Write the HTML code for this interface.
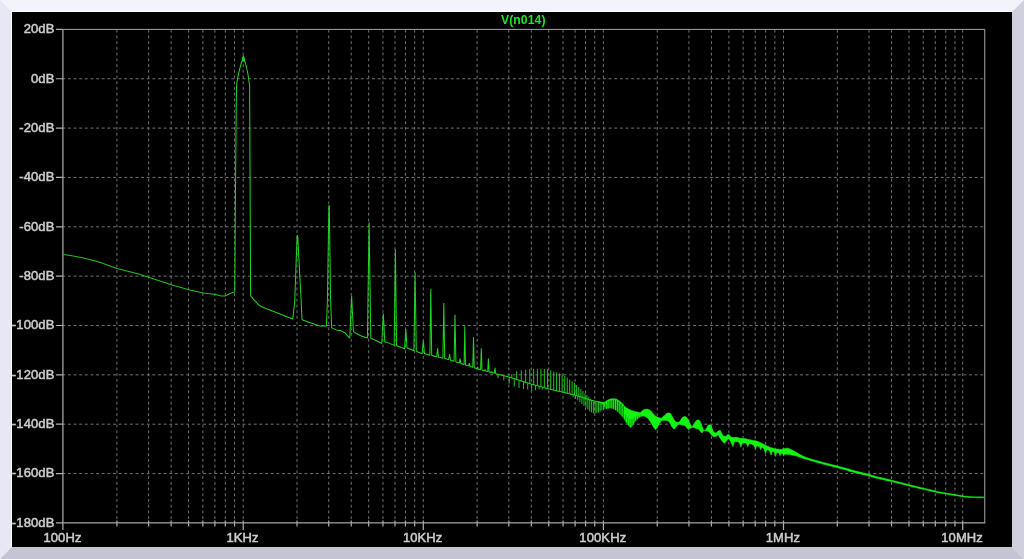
<!DOCTYPE html>
<html><head><meta charset="utf-8"><title>V(n014)</title>
<style>
html,body{margin:0;padding:0;background:#000;overflow:hidden}
svg{display:block}
text{font-family:"Liberation Sans",sans-serif;font-size:13px;fill:#cdcdcd;stroke:#cdcdcd;stroke-width:0.5px;letter-spacing:0.12px}
</style></head><body>
<svg width="1024" height="559" viewBox="0 0 1024 559">
<defs><filter id="nf" x="0" y="0" width="1024" height="559" filterUnits="userSpaceOnUse"><feOffset dx="0" dy="0"/></filter></defs>
<rect width="1024" height="559" fill="#f3f3fb"/>
<polygon points="0,0 12,12 12,547 0,559" fill="#e8e8f5"/>
<polygon points="1024,0 1012,12 1012,547 1024,559" fill="#cfcfdd"/>
<polygon points="0,559 12,547 1012,547 1024,559" fill="#c4c4d4"/>
<rect x="11" y="11" width="1001" height="536" fill="#ffffff"/>
<rect x="12" y="12" width="1000" height="535" fill="#000"/>
<path d="M116.92 29.80V522.90M148.63 29.80V522.90M171.13 29.80V522.90M188.58 29.80V522.90M202.85 29.80V522.90M214.90 29.80V522.90M225.35 29.80V522.90M234.56 29.80V522.90M243.20 29.80V522.90M297.02 29.80V522.90M328.73 29.80V522.90M351.23 29.80V522.90M368.68 29.80V522.90M382.95 29.80V522.90M395.00 29.80V522.90M405.45 29.80V522.90M414.66 29.80V522.90M423.30 29.80V522.90M477.12 29.80V522.90M508.83 29.80V522.90M531.33 29.80V522.90M548.78 29.80V522.90M563.05 29.80V522.90M575.10 29.80V522.90M585.55 29.80V522.90M594.76 29.80V522.90M603.40 29.80V522.90M657.22 29.80V522.90M688.93 29.80V522.90M711.43 29.80V522.90M728.88 29.80V522.90M743.15 29.80V522.90M755.20 29.80V522.90M765.65 29.80V522.90M774.86 29.80V522.90M783.50 29.80V522.90M837.32 29.80V522.90M869.03 29.80V522.90M891.53 29.80V522.90M908.98 29.80V522.90M923.25 29.80V522.90M935.30 29.80V522.90M945.75 29.80V522.90M954.96 29.80V522.90M962.70 29.80V522.90" stroke="#747474" stroke-width="1" stroke-dasharray="2.8 2.923" fill="none"/>
<path d="M62.30 78.75H984.75M62.30 128.10H984.75M62.30 177.45H984.75M62.30 226.80H984.75M62.30 276.15H984.75M62.30 325.50H984.75M62.30 374.85H984.75M62.30 424.20H984.75M62.30 473.55H984.75" stroke="#747474" stroke-width="1" stroke-dasharray="2.9 2.732" fill="none"/>
<path d="M116.92 520.60V526.40M148.63 520.60V526.40M171.13 520.60V526.40M188.58 520.60V526.40M202.85 520.60V526.40M214.90 520.60V526.40M225.35 520.60V526.40M234.56 520.60V526.40M243.20 520.60V529.90M297.02 520.60V526.40M328.73 520.60V526.40M351.23 520.60V526.40M368.68 520.60V526.40M382.95 520.60V526.40M395.00 520.60V526.40M405.45 520.60V526.40M414.66 520.60V526.40M423.30 520.60V529.90M477.12 520.60V526.40M508.83 520.60V526.40M531.33 520.60V526.40M548.78 520.60V526.40M563.05 520.60V526.40M575.10 520.60V526.40M585.55 520.60V526.40M594.76 520.60V526.40M603.40 520.60V529.90M657.22 520.60V526.40M688.93 520.60V526.40M711.43 520.60V526.40M728.88 520.60V526.40M743.15 520.60V526.40M755.20 520.60V526.40M765.65 520.60V526.40M774.86 520.60V526.40M783.50 520.60V529.90M837.32 520.60V526.40M869.03 520.60V526.40M891.53 520.60V526.40M908.98 520.60V526.40M923.25 520.60V526.40M935.30 520.60V526.40M945.75 520.60V526.40M954.96 520.60V526.40M962.70 520.60V529.90M62.90 522.90V529.90M56.00 29.40H62.90M56.00 78.75H62.90M56.00 128.10H62.90M56.00 177.45H62.90M56.00 226.80H62.90M56.00 276.15H62.90M56.00 325.50H62.90M56.00 374.85H62.90M56.00 424.20H62.90M56.00 473.55H62.90M56.00 522.90H62.90" stroke="#b0b0b0" stroke-width="1.2" fill="none"/>
<path d="M62.90 29.40H984.75V522.90" stroke="#a6a6a6" stroke-width="1" fill="none"/>
<path d="M62.90 28.90V522.90H985.25" stroke="#a4a4a4" stroke-width="1.3" fill="none"/>
<g filter="url(#nf)"><text x="62.5" y="542.3" text-anchor="middle">100Hz</text><text x="242.6" y="542.3" text-anchor="middle">1KHz</text><text x="422.7" y="542.3" text-anchor="middle">10KHz</text><text x="602.8" y="542.3" text-anchor="middle">100KHz</text><text x="782.9" y="542.3" text-anchor="middle">1MHz</text><text x="962.1" y="542.3" text-anchor="middle">10MHz</text><text x="54.5" y="33.1" text-anchor="end">20dB</text><text x="54.5" y="82.5" text-anchor="end">0dB</text><text x="54.5" y="131.8" text-anchor="end">-20dB</text><text x="54.5" y="181.1" text-anchor="end">-40dB</text><text x="54.5" y="230.5" text-anchor="end">-60dB</text><text x="54.5" y="279.8" text-anchor="end">-80dB</text><text x="54.5" y="329.2" text-anchor="end">-100dB</text><text x="54.5" y="378.6" text-anchor="end">-120dB</text><text x="54.5" y="427.9" text-anchor="end">-140dB</text><text x="54.5" y="477.2" text-anchor="end">-160dB</text><text x="54.5" y="526.6" text-anchor="end">-180dB</text></g>
<g filter="url(#nf)"><text x="523.3" y="24.2" text-anchor="middle" style="fill:#1fe61f;stroke:none;letter-spacing:0.1px;font-weight:bold;font-size:12.2px">V(n014)</text></g>
<path d="M598.0 401.8 L598.4 401.9 L598.8 401.9 L599.2 402.0 L599.6 402.0 L600.0 402.1 L600.4 402.1 L600.8 402.2 L601.2 402.2 L601.6 402.3 L602.0 402.3 L602.4 402.4 L602.8 402.4 L603.2 402.4 L603.6 402.5 L604.0 402.5 L604.4 402.2 L604.8 401.9 L605.2 401.7 L605.6 401.4 L606.0 401.2 L606.4 400.9 L606.8 400.6 L607.2 400.4 L607.6 400.1 L608.0 399.9 L608.4 399.7 L608.8 399.5 L609.2 399.4 L609.6 399.2 L610.0 399.1 L610.4 399.0 L610.8 398.9 L611.2 398.8 L611.6 398.7 L612.0 398.7 L612.4 398.7 L612.8 398.7 L613.2 398.7 L613.6 398.7 L614.0 398.8 L614.4 398.8 L614.8 398.8 L615.2 398.9 L615.6 398.9 L616.0 399.0 L616.4 399.1 L616.8 399.2 L617.2 399.4 L617.6 399.7 L618.0 399.9 L618.4 400.2 L618.8 400.5 L619.2 400.8 L619.6 401.1 L620.0 401.4 L620.4 401.8 L620.8 402.1 L621.2 402.5 L621.6 402.8 L622.0 403.2 L622.4 403.6 L622.8 404.0 L623.2 404.5 L623.6 405.0 L624.0 405.5 L624.4 405.9 L624.8 406.4 L625.2 406.8 L625.6 407.2 L626.0 407.5 L626.4 407.8 L626.8 408.1 L627.2 408.3 L627.6 408.6 L628.0 408.8 L628.4 409.0 L628.8 409.2 L629.2 409.4 L629.6 409.6 L630.0 409.7 L630.4 409.9 L630.8 410.1 L631.2 410.2 L631.6 410.4 L632.0 410.5 L632.4 410.7 L632.8 410.8 L633.2 410.9 L633.6 411.0 L634.0 411.2 L634.4 411.3 L634.8 411.4 L635.2 411.5 L635.6 411.6 L636.0 411.7 L636.4 411.8 L636.8 411.9 L637.2 412.0 L637.6 412.1 L638.0 412.2 L638.4 412.3 L638.8 412.4 L639.2 412.5 L639.6 412.6 L640.0 412.7 L640.4 412.5 L640.8 412.2 L641.2 411.8 L641.6 411.5 L642.0 411.1 L642.4 410.8 L642.8 410.4 L643.2 410.0 L643.6 409.8 L644.0 409.6 L644.4 409.5 L644.8 409.4 L645.2 409.3 L645.6 409.2 L646.0 409.1 L646.4 409.1 L646.8 409.1 L647.2 409.1 L647.6 409.2 L648.0 409.3 L648.4 409.4 L648.8 409.6 L649.2 409.7 L649.6 410.0 L650.0 410.3 L650.4 410.6 L650.8 411.0 L651.2 411.4 L651.6 411.8 L652.0 412.2 L652.4 412.7 L652.8 413.2 L653.2 413.7 L653.6 414.2 L654.0 414.6 L654.4 415.0 L654.8 415.4 L655.2 415.7 L655.6 416.0 L656.0 416.3 L656.4 416.6 L656.8 416.8 L657.2 417.0 L657.6 417.1 L658.0 417.3 L658.4 417.5 L658.8 417.6 L659.2 417.7 L659.6 417.8 L660.0 417.9 L660.4 418.0 L660.8 418.1 L661.2 418.2 L661.6 418.1 L662.0 417.6 L662.4 417.2 L662.8 416.8 L663.2 416.4 L663.6 416.1 L664.0 415.8 L664.4 415.5 L664.8 415.2 L665.2 414.9 L665.6 414.5 L666.0 414.1 L666.4 413.6 L666.8 413.3 L667.2 413.0 L667.6 413.0 L668.0 413.0 L668.4 412.9 L668.8 412.9 L669.2 412.9 L669.6 412.9 L670.0 413.2 L670.4 413.6 L670.8 414.1 L671.2 414.6 L671.6 415.2 L672.0 416.0 L672.4 416.8 L672.8 417.6 L673.2 418.2 L673.6 418.9 L674.0 419.6 L674.4 420.2 L674.8 420.8 L675.2 421.2 L675.6 421.6 L676.0 421.8 L676.4 422.1 L676.8 422.2 L677.2 422.3 L677.6 422.2 L678.0 422.2 L678.4 422.1 L678.8 422.0 L679.2 422.0 L679.6 421.7 L680.0 420.9 L680.4 420.2 L680.8 419.5 L681.2 419.0 L681.6 418.4 L682.0 417.9 L682.4 417.4 L682.8 417.1 L683.2 416.9 L683.6 416.7 L684.0 416.6 L684.4 416.6 L684.8 416.5 L685.2 416.5 L685.6 416.6 L686.0 416.9 L686.4 417.2 L686.8 417.6 L687.2 418.0 L687.6 418.6 L688.0 419.3 L688.4 420.1 L688.8 420.9 L689.2 421.7 L689.6 422.6 L690.0 423.5 L690.4 424.4 L690.8 425.1 L691.2 425.6 L691.6 425.9 L692.0 426.2 L692.4 426.3 L692.8 425.8 L693.2 425.3 L693.6 424.7 L694.0 424.1 L694.4 423.5 L694.8 422.8 L695.2 421.9 L695.6 421.2 L696.0 420.7 L696.4 420.4 L696.8 420.2 L697.2 420.1 L697.6 419.9 L698.0 419.9 L698.4 420.0 L698.8 420.1 L699.2 420.4 L699.6 420.7 L700.0 421.1 L700.4 421.8 L700.8 422.8 L701.2 424.0 L701.6 425.1 L702.0 426.2 L702.4 427.3 L702.8 428.4 L703.2 429.3 L703.6 429.9 L704.0 430.3 L704.4 430.6 L704.8 430.7 L705.2 430.0 L705.6 429.4 L706.0 428.7 L706.4 428.1 L706.8 427.5 L707.2 426.8 L707.6 426.1 L708.0 425.4 L708.4 424.9 L708.8 424.7 L709.2 424.7 L709.6 424.8 L710.0 424.9 L710.4 425.1 L710.8 425.4 L711.2 426.1 L711.6 427.1 L712.0 428.1 L712.4 429.0 L712.8 429.9 L713.2 430.9 L713.6 431.7 L714.0 432.3 L714.4 432.6 L714.8 432.8 L715.2 433.0 L715.6 433.0 L716.0 432.8 L716.4 432.6 L716.8 432.4 L717.2 432.0 L717.6 431.5 L718.0 431.1 L718.4 430.7 L718.8 430.6 L719.2 430.5 L719.6 430.4 L720.0 430.3 L720.4 430.5 L720.8 431.2 L721.2 432.2 L721.6 433.0 L722.0 433.7 L722.4 434.4 L722.8 435.1 L723.2 435.6 L723.6 436.0 L724.0 436.1 L724.4 436.2 L724.8 436.3 L725.2 436.3 L725.6 436.4 L726.0 436.4 L726.4 435.9 L726.8 435.3 L727.2 434.9 L727.6 434.6 L728.0 434.5 L728.4 434.4 L728.8 434.4 L729.2 434.7 L729.6 435.1 L730.0 435.8 L730.4 436.5 L730.8 436.7 L731.2 436.9 L731.6 437.0 L732.0 437.2 L732.4 437.3 L732.8 437.3 L733.2 437.3 L733.6 437.3 L734.0 437.3 L734.4 437.3 L734.8 437.3 L735.2 437.3 L735.6 437.3 L736.0 437.3 L736.4 437.3 L736.8 437.3 L737.2 437.3 L737.6 437.4 L738.0 437.6 L738.4 437.8 L738.8 437.9 L739.2 438.1 L739.6 438.2 L740.0 438.3 L740.4 438.3 L740.8 438.3 L741.2 438.3 L741.6 438.3 L742.0 438.3 L742.4 438.4 L742.8 438.4 L743.2 438.4 L743.6 438.4 L744.0 438.4 L744.4 438.4 L744.8 438.5 L745.2 438.5 L745.6 438.6 L746.0 438.7 L746.4 438.9 L746.8 439.0 L747.2 439.1 L747.6 439.2 L748.0 439.3 L748.4 439.4 L748.8 439.4 L749.2 439.5 L749.6 439.6 L750.0 439.7 L750.4 439.8 L750.8 439.8 L751.2 439.9 L751.6 440.0 L752.0 440.1 L752.4 440.2 L752.8 440.2 L753.2 440.3 L753.6 440.4 L754.0 440.4 L754.4 440.5 L754.8 440.6 L755.2 440.7 L755.6 440.8 L756.0 440.8 L756.4 440.9 L756.8 441.0 L757.2 441.2 L757.6 441.3 L758.0 441.5 L758.4 441.6 L758.8 441.8 L759.2 442.0 L759.6 442.2 L760.0 442.4 L760.4 442.6 L760.8 442.8 L761.2 443.0 L761.6 443.2 L762.0 443.4 L762.4 443.6 L762.8 443.8 L763.2 444.0 L763.6 444.2 L764.0 444.4 L764.4 444.6 L764.8 444.8 L765.2 445.0 L765.6 445.2 L766.0 445.4 L766.4 445.6 L766.8 445.9 L767.2 446.0 L767.6 446.2 L768.0 446.4 L768.4 446.6 L768.8 446.7 L769.2 446.9 L769.6 447.1 L770.0 447.2 L770.4 447.4 L770.8 447.5 L771.2 447.6 L771.6 447.8 L772.0 447.9 L772.4 448.0 L772.8 448.1 L773.2 448.2 L773.6 448.3 L774.0 448.4 L774.4 448.5 L774.8 448.6 L775.2 448.7 L775.6 448.7 L776.0 448.8 L776.4 448.9 L776.8 448.9 L777.2 449.0 L777.6 449.1 L778.0 449.1 L778.4 449.2 L778.8 449.2 L779.2 449.3 L779.6 449.3 L780.0 449.3 L780.4 449.4 L780.8 449.4 L781.2 449.4 L781.6 449.3 L782.0 449.2 L782.4 449.0 L782.8 448.8 L783.2 448.7 L783.6 448.6 L784.0 448.5 L784.4 448.5 L784.8 448.4 L785.2 448.4 L785.6 448.3 L786.0 448.3 L786.4 448.2 L786.8 448.2 L787.2 448.2 L787.6 448.2 L788.0 448.2 L788.4 448.3 L788.8 448.5 L789.2 448.6 L789.6 448.8 L790.0 449.0 L790.4 449.2 L790.8 449.4 L791.2 449.6 L791.6 449.8 L792.0 450.0 L792.4 450.2 L792.8 450.4 L793.2 450.6 L793.6 450.8 L794.0 451.0 L794.4 451.2 L794.8 451.4 L795.2 451.6 L795.6 451.9 L796.0 452.1 L796.4 452.3 L796.8 452.5 L797.2 452.8 L797.6 453.0 L798.0 453.2 L798.4 453.4 L798.8 453.7 L799.2 453.9 L799.6 454.1 L800.0 454.4 L800.4 454.6 L800.8 454.8 L801.2 455.1 L801.6 455.3 L802.0 455.5 L802.4 455.7 L802.8 455.9 L803.2 456.1 L803.6 456.3 L804.0 456.4 L804.4 456.6 L804.8 456.8 L805.2 456.9 L805.6 457.1 L806.0 457.2 L806.4 457.4 L806.8 457.5 L807.2 457.7 L807.6 457.8 L808.0 458.0 L808.4 458.1 L808.8 458.2 L809.2 458.4 L809.6 458.5 L810.0 458.6 L810.4 458.8 L810.8 458.9 L811.2 459.0 L811.6 459.1 L812.0 459.3 L812.4 459.4 L812.8 459.5 L813.2 459.6 L813.6 459.7 L814.0 459.8 L814.4 459.9 L814.8 460.1 L815.2 460.2 L815.6 460.3 L816.0 460.4 L816.4 460.5 L816.8 460.6 L817.2 460.7 L817.6 460.8 L818.0 461.0 L818.4 461.1 L818.8 461.2 L819.2 461.3 L819.6 461.4 L820.0 461.5 L820.4 461.6 L820.8 461.7 L821.2 461.8 L821.6 461.9 L822.0 462.0 L822.4 462.2 L822.8 462.3 L823.2 462.4 L823.6 462.5 L824.0 462.6 L824.4 462.7 L824.8 462.8 L825.2 462.9 L825.6 463.0 L826.0 463.1 L826.4 463.2 L826.8 463.3 L827.2 463.4 L827.6 463.5 L828.0 463.6 L828.4 463.7 L828.8 463.8 L829.2 463.9 L829.6 464.0 L830.0 464.1 L830.4 464.2 L830.8 464.3 L831.2 464.4 L831.6 464.5 L832.0 464.6 L832.4 464.7 L832.8 464.8 L833.2 464.9 L833.6 465.0 L834.0 465.1 L834.4 465.2 L834.8 465.3 L835.2 465.4 L835.6 465.5 L836.0 465.6 L836.4 465.7 L836.8 465.8 L837.2 465.9 L837.6 466.0 L838.0 466.1 L838.4 466.2 L838.8 466.4 L839.2 466.5 L839.6 466.6 L840.0 466.7 L840.4 466.8 L840.8 466.9 L841.2 467.0 L841.6 467.1 L842.0 467.2 L842.4 467.3 L842.8 467.4 L843.2 467.5 L843.6 467.6 L844.0 467.7 L844.4 467.8 L844.8 467.9 L845.2 468.0 L845.6 468.1 L846.0 468.2 L846.4 468.3 L846.8 468.4 L847.2 468.6 L847.6 468.7 L848.0 468.8 L848.4 468.9 L848.8 469.0 L849.2 469.1 L849.6 469.2 L850.0 469.3 L850.0 471.1 L849.6 471.0 L849.2 470.9 L848.8 470.8 L848.4 470.7 L848.0 470.6 L847.6 470.5 L847.2 470.4 L846.8 470.2 L846.4 470.1 L846.0 470.0 L845.6 469.9 L845.2 469.8 L844.8 469.7 L844.4 469.6 L844.0 469.5 L843.6 469.4 L843.2 469.3 L842.8 469.2 L842.4 469.1 L842.0 469.0 L841.6 468.9 L841.2 468.8 L840.8 468.7 L840.4 468.6 L840.0 468.5 L839.6 468.4 L839.2 468.3 L838.8 468.2 L838.4 468.0 L838.0 467.9 L837.6 467.8 L837.2 467.7 L836.8 467.6 L836.4 467.5 L836.0 467.4 L835.6 467.3 L835.2 467.2 L834.8 467.1 L834.4 467.0 L834.0 466.9 L833.6 466.8 L833.2 466.7 L832.8 466.6 L832.4 466.5 L832.0 466.4 L831.6 466.3 L831.2 466.2 L830.8 466.1 L830.4 466.0 L830.0 465.9 L829.6 465.8 L829.2 465.7 L828.8 465.6 L828.4 465.5 L828.0 465.4 L827.6 465.3 L827.2 465.2 L826.8 465.1 L826.4 465.0 L826.0 464.9 L825.6 464.8 L825.2 464.7 L824.8 464.6 L824.4 464.5 L824.0 464.4 L823.6 464.3 L823.2 464.2 L822.8 464.1 L822.4 464.0 L822.0 463.8 L821.6 463.7 L821.2 463.6 L820.8 463.5 L820.4 463.4 L820.0 463.3 L819.6 463.2 L819.2 463.1 L818.8 463.0 L818.4 462.9 L818.0 462.7 L817.6 462.6 L817.2 462.5 L816.8 462.4 L816.4 462.3 L816.0 462.2 L815.6 462.1 L815.2 461.9 L814.8 461.8 L814.4 461.7 L814.0 461.6 L813.6 461.5 L813.2 461.3 L812.8 461.2 L812.4 461.1 L812.0 461.0 L811.6 460.9 L811.2 460.7 L810.8 460.6 L810.4 460.5 L810.0 460.4 L809.6 460.3 L809.2 460.2 L808.8 460.0 L808.4 459.9 L808.0 459.8 L807.6 459.7 L807.2 459.6 L806.8 459.5 L806.4 459.4 L806.0 459.3 L805.6 459.2 L805.2 459.1 L804.8 458.9 L804.4 458.8 L804.0 458.7 L803.6 458.6 L803.2 458.5 L802.8 458.3 L802.4 458.2 L802.0 458.1 L801.6 457.9 L801.2 457.8 L800.8 457.6 L800.4 457.5 L800.0 457.3 L799.6 457.2 L799.2 457.0 L798.8 456.9 L798.4 456.7 L798.0 456.6 L797.6 456.5 L797.2 456.3 L796.8 456.2 L796.4 456.1 L796.0 455.9 L795.6 455.8 L795.2 455.7 L794.8 455.6 L794.4 455.5 L794.0 455.4 L793.6 455.3 L793.2 455.2 L792.8 455.2 L792.4 455.1 L792.0 455.0 L791.6 455.0 L791.2 454.9 L790.8 454.8 L790.4 454.8 L790.0 454.7 L789.6 454.7 L789.2 454.6 L788.8 454.6 L788.4 454.5 L788.0 454.4 L787.6 454.4 L787.2 454.3 L786.8 454.3 L786.4 454.2 L786.0 454.2 L785.6 454.2 L785.2 454.3 L784.8 454.5 L784.4 454.8 L784.0 455.0 L783.6 455.3 L783.2 454.7 L782.8 454.1 L782.4 453.7 L782.0 453.5 L781.6 453.4 L781.2 453.5 L780.8 454.0 L780.4 454.8 L780.0 455.9 L779.6 455.1 L779.2 453.8 L778.8 453.1 L778.4 452.9 L778.0 452.7 L777.6 452.6 L777.2 452.6 L776.8 452.8 L776.4 453.7 L776.0 455.0 L775.6 456.6 L775.2 454.8 L774.8 453.3 L774.4 452.3 L774.0 451.9 L773.6 451.7 L773.2 451.5 L772.8 451.4 L772.4 451.6 L772.0 452.3 L771.6 453.5 L771.2 455.0 L770.8 455.0 L770.4 453.5 L770.0 452.2 L769.6 451.3 L769.2 450.8 L768.8 450.4 L768.4 450.1 L768.0 449.9 L767.6 449.8 L767.2 449.9 L766.8 450.2 L766.4 451.0 L766.0 452.0 L765.6 453.2 L765.2 452.9 L764.8 451.3 L764.4 449.9 L764.0 448.9 L763.6 448.4 L763.2 447.9 L762.8 447.6 L762.4 447.4 L762.0 447.5 L761.6 447.9 L761.2 448.6 L760.8 449.6 L760.4 449.6 L760.0 448.3 L759.6 447.3 L759.2 446.6 L758.8 446.4 L758.4 446.3 L758.0 446.2 L757.6 446.1 L757.2 446.1 L756.8 446.2 L756.4 446.7 L756.0 447.6 L755.6 448.8 L755.2 448.7 L754.8 447.3 L754.4 446.4 L754.0 445.8 L753.6 445.4 L753.2 445.1 L752.8 444.8 L752.4 444.6 L752.0 444.4 L751.6 444.2 L751.2 444.0 L750.8 443.9 L750.4 443.8 L750.0 443.7 L749.6 443.7 L749.2 444.0 L748.8 444.6 L748.4 445.4 L748.0 446.3 L747.6 446.7 L747.2 445.5 L746.8 444.5 L746.4 443.9 L746.0 443.4 L745.6 443.0 L745.2 442.9 L744.8 442.9 L744.4 442.9 L744.0 442.9 L743.6 442.9 L743.2 442.9 L742.8 442.9 L742.4 443.3 L742.0 444.1 L741.6 445.2 L741.2 446.4 L740.8 447.0 L740.4 445.6 L740.0 444.4 L739.6 443.6 L739.2 443.0 L738.8 442.5 L738.4 442.0 L738.0 441.8 L737.6 441.7 L737.2 441.7 L736.8 441.7 L736.4 441.7 L736.0 441.7 L735.6 441.7 L735.2 441.7 L734.8 441.7 L734.4 442.1 L734.0 443.1 L733.6 444.5 L733.2 446.2 L732.8 446.6 L732.4 445.7 L732.0 444.8 L731.6 443.9 L731.2 443.0 L730.8 442.0 L730.4 441.2 L730.0 440.5 L729.6 439.9 L729.2 439.4 L728.8 439.0 L728.4 438.9 L728.0 439.2 L727.6 439.6 L727.2 440.0 L726.8 440.4 L726.4 440.8 L726.0 441.3 L725.6 441.9 L725.2 442.4 L724.8 443.1 L724.4 443.5 L724.0 443.1 L723.6 442.8 L723.2 442.3 L722.8 441.9 L722.4 441.4 L722.0 440.9 L721.6 440.4 L721.2 439.8 L720.8 439.2 L720.4 438.7 L720.0 438.0 L719.6 437.4 L719.2 436.7 L718.8 436.1 L718.4 435.3 L718.0 434.9 L717.6 435.2 L717.2 435.6 L716.8 435.9 L716.4 436.1 L716.0 436.3 L715.6 436.4 L715.2 436.5 L714.8 436.6 L714.4 436.7 L714.0 436.8 L713.6 436.8 L713.2 436.7 L712.8 436.3 L712.4 435.9 L712.0 435.5 L711.6 435.1 L711.2 434.7 L710.8 434.2 L710.4 433.7 L710.0 433.1 L709.6 432.6 L709.2 432.2 L708.8 431.9 L708.4 431.6 L708.0 431.4 L707.6 431.2 L707.2 431.0 L706.8 430.8 L706.4 430.7 L706.0 430.7 L705.6 430.7 L705.2 430.7 L704.8 430.8 L704.4 430.9 L704.0 431.0 L703.6 431.1 L703.2 431.3 L702.8 431.8 L702.4 432.4 L702.0 433.0 L701.6 432.7 L701.2 432.3 L700.8 431.9 L700.4 431.4 L700.0 430.9 L699.6 430.3 L699.2 429.8 L698.8 429.5 L698.4 429.3 L698.0 429.2 L697.6 429.0 L697.2 428.9 L696.8 428.8 L696.4 428.7 L696.0 428.5 L695.6 428.4 L695.2 428.2 L694.8 428.0 L694.4 427.8 L694.0 427.6 L693.6 427.5 L693.2 427.5 L692.8 427.5 L692.4 427.5 L692.0 427.6 L691.6 427.7 L691.2 427.8 L690.8 427.9 L690.4 428.0 L690.0 428.3 L689.6 428.7 L689.2 429.2 L688.8 429.7 L688.4 429.5 L688.0 429.2 L687.6 428.8 L687.2 428.4 L686.8 427.9 L686.4 427.4 L686.0 426.8 L685.6 426.3 L685.2 426.0 L684.8 425.8 L684.4 425.6 L684.0 425.5 L683.6 425.4 L683.2 425.3 L682.8 425.2 L682.4 425.1 L682.0 425.0 L681.6 424.9 L681.2 424.8 L680.8 424.7 L680.4 424.6 L680.0 424.5 L679.6 424.4 L679.2 424.3 L678.8 424.3 L678.4 424.4 L678.0 424.6 L677.6 425.1 L677.2 425.6 L676.8 426.1 L676.4 426.6 L676.0 427.0 L675.6 427.5 L675.2 428.0 L674.8 428.5 L674.4 429.0 L674.0 429.0 L673.6 428.8 L673.2 428.5 L672.8 428.1 L672.4 427.7 L672.0 427.0 L671.6 426.2 L671.2 425.4 L670.8 424.6 L670.4 424.0 L670.0 423.3 L669.6 422.7 L669.2 422.1 L668.8 421.6 L668.4 421.2 L668.0 421.0 L667.6 420.9 L667.2 420.8 L666.8 420.6 L666.4 420.6 L666.0 420.5 L665.6 420.4 L665.2 420.4 L664.8 420.4 L664.4 420.4 L664.0 420.4 L663.6 420.4 L663.2 420.5 L662.8 420.5 L662.4 420.5 L662.0 420.6 L661.6 420.7 L661.2 421.1 L660.8 421.6 L660.4 422.3 L660.0 423.0 L659.6 423.6 L659.2 424.3 L658.8 424.9 L658.4 425.6 L658.0 426.3 L657.6 427.0 L657.2 427.7 L656.8 428.2 L656.4 428.7 L656.0 429.2 L655.6 429.7 L655.2 429.5 L654.8 429.0 L654.4 428.5 L654.0 427.9 L653.6 427.4 L653.2 426.7 L652.8 426.0 L652.4 425.4 L652.0 424.7 L651.6 424.0 L651.2 423.3 L650.8 422.6 L650.4 421.9 L650.0 421.2 L649.6 420.5 L649.2 419.9 L648.8 419.4 L648.4 419.0 L648.0 418.5 L647.6 418.1 L647.2 417.7 L646.8 417.5 L646.4 417.2 L646.0 417.0 L645.6 416.8 L645.2 416.6 L644.8 416.4 L644.4 416.3 L644.0 416.2 L643.6 416.1 L643.2 416.1 L642.8 416.1 L642.4 416.2 L642.0 416.3 L641.6 416.4 L641.2 416.5 L640.8 416.7 L640.4 416.8 L640.0 417.0 L639.6 417.2 L639.2 417.5 L638.8 417.8 L638.4 418.1 L638.0 418.5 L637.6 418.8 L637.2 419.2 L636.8 419.6 L636.4 420.0 L636.0 420.4 L635.6 420.9 L635.2 421.4 L634.8 421.9 L634.4 422.5 L634.0 423.2 L633.6 423.9 L633.2 424.6 L632.8 425.3 L632.4 426.0 L632.0 426.4 L631.6 426.8 L631.2 427.2 L630.8 427.5 L630.4 427.5 L630.0 427.1 L629.6 426.8 L629.2 426.4 L628.8 426.0 L628.4 425.5 L628.0 425.0 L627.6 424.5 L627.2 424.0 L626.8 423.4 L626.4 422.9 L626.0 422.2 L625.6 421.6 L625.2 420.9 L624.8 420.2 L624.4 419.5 L624.0 418.8 L623.6 418.2 L623.2 417.7 L622.8 417.1 L622.4 416.7 L622.0 416.2 L621.6 415.7 L621.2 415.3 L620.8 414.9 L620.4 414.4 L620.0 414.0 L619.6 413.6 L619.2 413.1 L618.8 412.7 L618.4 412.3 L618.0 411.9 L617.6 411.5 L617.2 411.1 L616.8 410.8 L616.4 410.5 L616.0 410.2 L615.6 409.9 L615.2 409.7 L614.8 409.4 L614.4 409.2 L614.0 409.0 L613.6 408.9 L613.2 408.7 L612.8 408.6 L612.4 408.4 L612.0 408.3 L611.6 408.2 L611.2 408.2 L610.8 408.1 L610.4 408.1 L610.0 408.1 L609.6 408.1 L609.2 408.2 L608.8 408.2 L608.4 408.3 L608.0 408.4 L607.6 408.4 L607.2 408.5 L606.8 408.5 L606.4 408.5 L606.0 408.4 L605.6 408.0 L605.2 407.5 L604.8 406.9 L604.4 406.3 L604.0 405.7 L603.6 405.1 L603.2 404.7 L602.8 404.4 L602.4 404.1 L602.0 403.8 L601.6 403.6 L601.2 403.3 L600.8 403.1 L600.4 402.9 L600.0 402.7 L599.6 402.5 L599.2 402.4 L598.8 402.3 L598.4 402.2 L598.0 402.2Z" fill="#12f512" stroke="#12f512" stroke-width="0.5" stroke-linejoin="round"/>
<path d="M601.20 403.6V403.9M603.40 403.9V405.5M605.60 402.8V408.6M607.80 401.4V409.0M610.00 400.5V408.7M612.20 400.1V409.0M614.40 400.2V409.8M616.60 400.5V411.3M618.80 401.9V413.3M621.00 403.7V415.7M623.20 405.9V418.3" stroke="#000" stroke-opacity="0.6" stroke-width="1" fill="none"/>
<path d="M625.40 414.6V421.8M627.60 417.1V425.1M629.80 418.8V427.6M632.00 419.0V427.0M634.20 417.5V423.4M636.40 416.4V420.6M638.60 415.7V418.5M640.80 414.9V417.3" stroke="#000" stroke-opacity="0.4" stroke-width="0.9" fill="none"/>
<path d="M848.0 468.9 L850.0 469.5 L852.0 470.0 L854.0 470.6 L856.0 471.1 L858.0 471.6 L860.0 472.1 L862.0 472.5 L864.0 473.0 L866.0 473.5 L868.0 474.0 L870.0 474.5 L872.0 475.2 L874.0 475.8 L876.0 476.4 L878.0 476.9 L880.0 477.3 L882.0 477.8 L884.0 478.3 L886.0 478.7 L888.0 479.2 L890.0 479.7 L892.0 480.2 L894.0 480.7 L896.0 481.2 L898.0 481.7 L900.0 482.2 L902.0 482.7 L904.0 483.2 L906.0 483.7 L908.0 484.3 L910.0 484.8 L912.0 485.3 L914.0 485.8 L916.0 486.2 L918.0 486.7 L920.0 487.2 L922.0 487.7 L924.0 488.2 L926.0 488.7 L928.0 489.2 L930.0 489.6 L932.0 490.1 L934.0 490.6 L936.0 491.0 L938.0 491.5 L940.0 491.9 L942.0 492.3 L944.0 492.6 L946.0 492.9 L948.0 493.3 L950.0 493.6 L952.0 493.9 L954.0 494.3 L956.0 494.6 L958.0 494.9 L960.0 495.3 L962.0 495.6 L964.0 496.0 L966.0 496.2 L968.0 496.3 L970.0 496.5 L972.0 496.6 L974.0 496.8 L976.0 496.8 L978.0 496.8 L980.0 496.8 L982.0 496.8 L984.0 496.9 L984.0 497.8 L982.0 497.8 L980.0 497.8 L978.0 497.8 L976.0 497.8 L974.0 497.7 L972.0 497.6 L970.0 497.5 L968.0 497.4 L966.0 497.2 L964.0 497.0 L962.0 496.7 L960.0 496.4 L958.0 496.1 L956.0 495.7 L954.0 495.4 L952.0 495.1 L950.0 494.8 L948.0 494.5 L946.0 494.1 L944.0 493.8 L942.0 493.5 L940.0 493.2 L938.0 492.8 L936.0 492.3 L934.0 491.9 L932.0 491.4 L930.0 491.0 L928.0 490.5 L926.0 490.1 L924.0 489.6 L922.0 489.1 L920.0 488.7 L918.0 488.2 L916.0 487.7 L914.0 487.2 L912.0 486.8 L910.0 486.3 L908.0 485.8 L906.0 485.3 L904.0 484.8 L902.0 484.3 L900.0 483.8 L898.0 483.3 L896.0 482.8 L894.0 482.3 L892.0 481.8 L890.0 481.3 L888.0 480.9 L886.0 480.4 L884.0 480.0 L882.0 479.5 L880.0 479.1 L878.0 478.6 L876.0 478.2 L874.0 477.6 L872.0 477.0 L870.0 476.3 L868.0 475.8 L866.0 475.3 L864.0 474.9 L862.0 474.4 L860.0 473.9 L858.0 473.4 L856.0 473.0 L854.0 472.5 L852.0 471.9 L850.0 471.4 L848.0 470.8Z" fill="#14f014" stroke="#14f014" stroke-width="0.4"/>
<path d="M498.04 374.3V378.0M500.99 375.0V374.7M503.83 375.7V380.4M506.58 376.4V375.9M509.23 377.1V383.6M511.79 377.9V374.2M514.28 378.7V386.6M516.68 379.4V371.2M519.02 380.2V388.0M521.29 380.9V370.3M523.49 381.6V389.0M525.63 382.3V369.6M527.72 383.0V389.5M529.75 383.6V368.8M531.73 384.2V390.8M533.66 384.7V368.8M535.55 385.2V390.2M537.39 385.7V368.8M539.19 386.2V389.4M540.94 386.7V368.8M542.66 387.2V389.4M544.34 387.7V368.8M545.99 388.2V389.4M547.60 388.6V368.8M550.73 389.4V370.2M553.74 390.1V371.6M556.64 390.7V372.4M559.43 391.3V373.3M562.13 391.9V374.4M564.74 392.5V376.0M566.01 392.8V393.1M567.26 393.1V377.8M568.49 393.4V393.8M569.71 393.7V379.5M570.90 394.0V394.9M572.08 394.4V381.4M573.23 394.7V396.8M574.38 395.1V382.9M575.50 395.4V398.6M576.61 395.7V385.1M577.71 396.0V400.4M578.78 396.4V387.1M579.85 396.7V402.1M580.90 397.0V388.9M581.93 397.4V404.0M582.96 397.7V391.2M583.97 398.0V405.8M584.96 398.4V393.3M585.95 398.7V407.6M586.92 399.0V395.1M587.88 399.3V409.6M588.83 399.6V396.8M589.76 399.9V411.4M590.69 400.2V398.7M591.60 400.4V412.4M593.40 400.8V413.3M595.16 401.1V413.7M596.88 401.5V413.0M598.56 401.9V412.4M600.21 402.2V411.4M601.82 402.6V410.4M603.40 402.9V409.5M604.95 403.2V408.9M605.71 403.3V403.0M606.47 403.5V408.5M607.22 403.6V403.0M607.96 403.8V408.0" stroke="#1fd41f" stroke-width="0.95" fill="none"/>
<path d="M242.3 58.2L243.35 56.2L244.4 58.2L245 61.6L241.8 61.6Z" fill="#22d822"/>
<path d="M63.4 254.4 L71.8 255.8 L82.6 257.8 L94.4 260.7 L101.3 262.7 L109.2 265.7 L117.1 268.6 L128.9 271.6 L138.7 274.0 L148.6 277.2 L160.0 280.9 L172.1 285.1 L189.9 290.0 L203.6 293.0 L215.4 294.5 L221.4 296.0 L225.1 296.0 L230.0 293.5 L234.8 292.1" stroke="#1fc01f" stroke-width="1.05" fill="none" stroke-linejoin="round"/>
<path d="M234.8 292.1 L235.4 200.0 L236.2 110.0 L236.5 86.0 L237.4 79.6 L238.5 74.0 L239.7 68.9 L241.3 63.0 L242.1 61.1 L242.7 58.0 L243.4 55.6 L244.0 58.0 L244.6 61.0 L245.2 62.2 L246.4 67.0 L247.6 72.5 L248.4 77.2 L249.2 82.7 L249.6 86.0 L249.9 150.0 L250.4 250.0 L250.6 295.6 L253.6 299.4 L259.0 305.3 L263.3 307.5 L268.6 309.6 L280.0 314.0 L292.6 319.0 L292.8 319.0 L294.8 300.3 L296.1 262.7 L297.1 236.5 L297.4 235.1 L297.8 237.0 L299.1 262.7 L301.1 300.3 L302.0 319.8 L302.1 319.8 L310.2 322.8 L320.0 325.9 L326.3 325.9 L326.5 326.0 L327.4 300.0 L328.9 205.5 L329.3 205.5 L330.6 300.0 L331.7 327.9 L331.8 327.9 L336.2 329.9 L340.1 330.4 L345.0 332.8 L349.3 337.6 L349.8 338.1 L351.6 295.9 L353.4 331.3 L355.9 333.3 L361.8 336.3 L367.2 338.0 L367.4 338.0 L369.1 222.3 L370.8 338.3 L376.5 340.7 L381.8 343.5 L383.3 313.5 L384.8 342.3 L385.8 341.9 L394.2 345.4 L394.2 345.4 L395.4 249.4 L396.6 345.7 L397.1 345.8 L404.5 348.8 L404.6 348.7 L405.8 329.1 L407.0 347.8 L413.9 350.8 L415.1 272.2 L416.3 351.3 L416.3 351.3 L422.1 353.7 L423.3 340.9 L424.5 353.7 L425.2 353.7 L429.6 355.2 L429.9 355.2 L430.8 289.0 L431.7 355.2 L436.0 356.7 L436.7 356.8 L437.6 348.3 L438.5 357.1 L439.0 357.2 L442.4 358.1 L442.9 358.2 L443.8 303.0 L444.7 358.6 L444.9 358.6 L448.3 359.6 L448.7 359.7 L449.6 354.0 L450.5 360.3 L454.1 361.3 L455.0 314.8 L455.9 361.9 L459.4 362.9 L460.1 358.5 L460.8 363.3 L464.1 364.4 L464.8 326.2 L465.5 364.9 L468.6 365.9 L469.3 363.2 L470.0 366.4 L472.8 367.3 L473.5 336.9 L474.2 367.8 L476.8 368.7 L477.5 367.0 L478.2 369.1 L480.6 369.7 L481.3 348.2 L482.0 370.1 L484.3 370.7 L485.0 369.5 L485.7 371.1 L487.7 371.6 L488.4 358.5 L489.1 372.0 L491.1 372.5 L491.8 371.5 L492.5 372.8 L494.2 373.3 L494.3 373.3 L495.0 367.8 L495.7 373.7 L509.0 377.0 L529.4 383.5 L549.0 389.0 L568.7 393.4 L578.6 396.3 L590.0 400.0 L599.5 402.1 L604.4 403.1" stroke="#1fd61f" stroke-width="1.02" fill="none" stroke-linejoin="bevel"/>
</svg>
</body></html>
